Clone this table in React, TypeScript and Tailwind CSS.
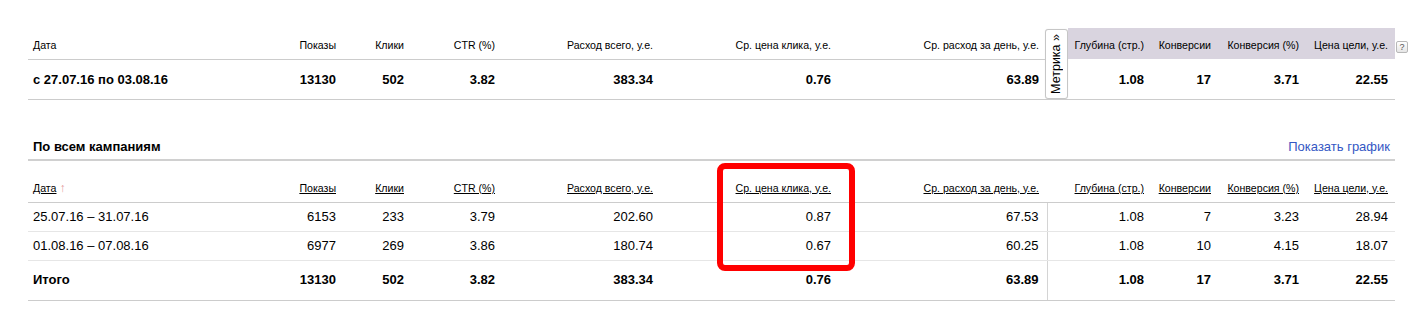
import React from "react";

const th = "align-bottom pb-[7px] pr-[6px] text-right text-[10.6px] leading-[13px] font-normal text-black whitespace-nowrap";
const thL = "align-bottom pb-[7px] pl-[5px] text-left text-[10.6px] leading-[13px] font-normal text-black whitespace-nowrap";
const thLav = "align-bottom pb-[7px] pr-[6px] text-right text-[10.6px] leading-[13px] font-normal text-black whitespace-nowrap bg-[#d9d4df]";
const td = "pr-[6px] text-right text-[13px] leading-[15px] text-black whitespace-nowrap";

export default function App() {
  return (
    <div className="relative w-[1423px] h-[326px] bg-white font-['Liberation_Sans',Arial,sans-serif] text-black">
      <div className="pt-[28px] pl-[28px] flex">
        <table className="table-fixed border-collapse w-[1367px]">
          <colgroup>
            <col className="w-[208px]" />
            <col className="w-[106px]" />
            <col className="w-[68px]" />
            <col className="w-[91px]" />
            <col className="w-[158px]" />
            <col className="w-[178px]" />
            <col className="w-[208px]" />
            <col className="w-[23px]" />
            <col className="w-[82px]" />
            <col className="w-[67px]" />
            <col className="w-[88px]" />
            <col className="w-[90px]" />
          </colgroup>
          <tbody>
            <tr className="h-[31px]">
              <th className={thL + " border-b border-[#cccccc]"}>Дата</th>
              <th className={th + " border-b border-[#cccccc]"}>Показы</th>
              <th className={th + " border-b border-[#cccccc]"}>Клики</th>
              <th className={th + " border-b border-[#cccccc]"}>CTR (%)</th>
              <th className={th + " border-b border-[#cccccc]"}>Расход всего, у.е.</th>
              <th className={th + " border-b border-[#cccccc]"}>Ср. цена клика, у.е.</th>
              <th className={th + " border-b border-[#cccccc]"}>Ср. расход за день, у.е.</th>
              <th rowSpan={2} className="p-0 align-top border-b border-[#cccccc]">
                <div className="mt-[1px] h-[70px] w-[23px] bg-white border border-[#c6c6c6] rounded-[3px] shadow-[0_0_1px_rgba(0,0,0,0.15)] flex items-center justify-center">
                  <span className="[writing-mode:vertical-rl] rotate-180 text-[12.5px] leading-[15px] font-normal whitespace-nowrap text-black">
                    Метрика »
                  </span>
                </div>
              </th>
              <th className={thLav}>Глубина (стр.)</th>
              <th className={thLav}>Конверсии</th>
              <th className={thLav}>Конверсия (%)</th>
              <th className={thLav + " pr-[7px]"}>Цена цели, у.е.</th>
            </tr>
            <tr className="h-[40px] font-bold">
              <td className="pl-[5px] text-left text-[13px] leading-[15px] border-b border-[#cccccc] whitespace-nowrap">с 27.07.16 по 03.08.16</td>
              <td className={td + " border-b border-[#cccccc]"}>13130</td>
              <td className={td + " border-b border-[#cccccc]"}>502</td>
              <td className={td + " border-b border-[#cccccc]"}>3.82</td>
              <td className={td + " border-b border-[#cccccc]"}>383.34</td>
              <td className={td + " border-b border-[#cccccc]"}>0.76</td>
              <td className={td + " border-b border-[#cccccc]"}>63.89</td>
              <td className={td + " border-b border-[#cccccc]"}>1.08</td>
              <td className={td + " border-b border-[#cccccc]"}>17</td>
              <td className={td + " border-b border-[#cccccc]"}>3.71</td>
              <td className={td + " pr-[7px] border-b border-[#cccccc]"}>22.55</td>
            </tr>
          </tbody>
        </table>
        <div className="ml-[1px] mt-[13px] w-[12px] h-[12px] border border-[#b8b8b8] rounded-[2px] bg-[linear-gradient(#ffffff,#e6e6e6)] flex items-center justify-center text-[9px] leading-[9px] text-[#555]">
          ?
        </div>
      </div>

      <div className="ml-[28px] w-[1367px] mt-[30px] h-[31px] border-b-2 border-[#d0d0d0] flex items-end justify-between pb-[5px]">
        <span className="pl-[5px] text-[13px] leading-[15px] font-bold">По всем кампаниям</span>
        <span className="pr-[5px] text-[13px] leading-[15px] text-[#3457c4]">Показать график</span>
      </div>

      <div className="ml-[28px]">
        <table className="table-fixed border-collapse w-[1367px]">
          <colgroup>
            <col className="w-[208px]" />
            <col className="w-[106px]" />
            <col className="w-[68px]" />
            <col className="w-[91px]" />
            <col className="w-[158px]" />
            <col className="w-[178px]" />
            <col className="w-[210px]" />
            <col className="w-[21px]" />
            <col className="w-[82px]" />
            <col className="w-[67px]" />
            <col className="w-[88px]" />
            <col className="w-[90px]" />
          </colgroup>
          <tbody>
            <tr className="h-[41px]">
              <th className={thL + " border-b border-[#cccccc]"}>
                <span className="underline">Дата</span>
                <span className="ml-[3px] text-[12px] text-[#e39a9a]">↑</span>
              </th>
              <th className={th + " border-b border-[#cccccc]"}><span className="underline">Показы</span></th>
              <th className={th + " border-b border-[#cccccc]"}><span className="underline">Клики</span></th>
              <th className={th + " border-b border-[#cccccc]"}><span className="underline">CTR (%)</span></th>
              <th className={th + " border-b border-[#cccccc]"}><span className="underline">Расход всего, у.е.</span></th>
              <th className={th + " border-b border-[#cccccc]"}><span className="underline">Ср. цена клика, у.е.</span></th>
              <th className={th + " pr-[8px] border-b border-[#cccccc]"}><span className="underline">Ср. расход за день, у.е.</span></th>
              <th className="border-b border-[#cccccc]"></th>
              <th className={th + " border-b border-[#cccccc]"}><span className="underline">Глубина (стр.)</span></th>
              <th className={th + " border-b border-[#cccccc]"}><span className="underline">Конверсии</span></th>
              <th className={th + " border-b border-[#cccccc]"}><span className="underline">Конверсия (%)</span></th>
              <th className={th + " pr-[7px] border-b border-[#cccccc]"}><span className="underline">Цена цели, у.е.</span></th>
            </tr>
            {[
              ["25.07.16 – 31.07.16", "6153", "233", "3.79", "202.60", "0.87", "67.53", "1.08", "7", "3.23", "28.94"],
              ["01.08.16 – 07.08.16", "6977", "269", "3.86", "180.74", "0.67", "60.25", "1.08", "10", "4.15", "18.07"],
            ].map((r, i) => (
              <tr key={i} className="h-[29px]">
                <td className="pl-[5px] text-left text-[13px] leading-[15px] border-b border-[#e6e6e6] whitespace-nowrap">{r[0]}</td>
                <td className={td + " border-b border-[#e6e6e6]"}>{r[1]}</td>
                <td className={td + " border-b border-[#e6e6e6]"}>{r[2]}</td>
                <td className={td + " border-b border-[#e6e6e6]"}>{r[3]}</td>
                <td className={td + " border-b border-[#e6e6e6]"}>{r[4]}</td>
                <td className={td + " border-b border-[#e6e6e6]"}>{r[5]}</td>
                <td className={td + " pr-[8px] border-b border-[#e6e6e6]"}>{r[6]}</td>
                <td className="border-l border-l-[#d4d4d4] border-b border-[#e6e6e6]"></td>
                <td className={td + " border-b border-[#e6e6e6]"}>{r[7]}</td>
                <td className={td + " border-b border-[#e6e6e6]"}>{r[8]}</td>
                <td className={td + " border-b border-[#e6e6e6]"}>{r[9]}</td>
                <td className={td + " pr-[7px] border-b border-[#e6e6e6]"}>{r[10]}</td>
              </tr>
            ))}
            <tr className="h-[40px] font-bold">
              <td className="pl-[5px] pb-[2px] text-left text-[13px] leading-[15px] border-b border-[#cccccc] whitespace-nowrap">Итого</td>
              <td className={td + " pb-[2px] border-b border-[#cccccc]"}>13130</td>
              <td className={td + " pb-[2px] border-b border-[#cccccc]"}>502</td>
              <td className={td + " pb-[2px] border-b border-[#cccccc]"}>3.82</td>
              <td className={td + " pb-[2px] border-b border-[#cccccc]"}>383.34</td>
              <td className={td + " pb-[2px] border-b border-[#cccccc]"}>0.76</td>
              <td className={td + " pb-[2px] pr-[8px] border-b border-[#cccccc]"}>63.89</td>
              <td className="border-l border-l-[#d4d4d4] border-b border-[#cccccc]"></td>
              <td className={td + " pb-[2px] border-b border-[#cccccc]"}>1.08</td>
              <td className={td + " pb-[2px] border-b border-[#cccccc]"}>17</td>
              <td className={td + " pb-[2px] border-b border-[#cccccc]"}>3.71</td>
              <td className={td + " pb-[2px] pr-[7px] border-b border-[#cccccc]"}>22.55</td>
            </tr>
          </tbody>
        </table>
      </div>

      <div className="absolute left-[717px] top-[163px] w-[138px] h-[108px] border-[6px] border-[#ff0000] rounded-[8px] pointer-events-none" />
    </div>
  );
}
